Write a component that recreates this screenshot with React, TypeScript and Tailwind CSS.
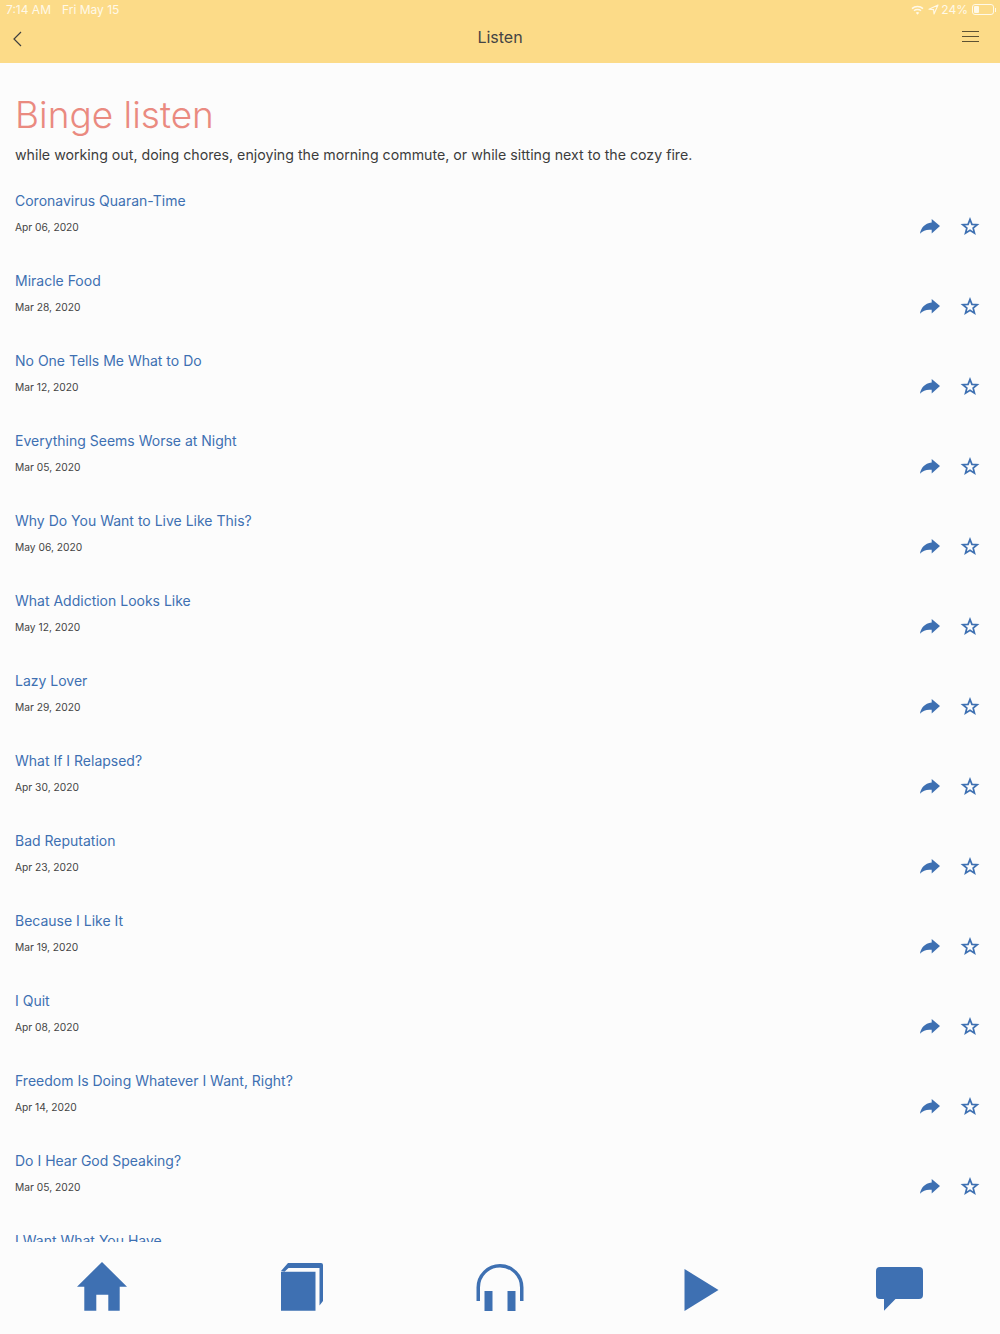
const rows: [string, string][] = [
  ["Coronavirus Quaran-Time", "Apr 06, 2020"],
  ["Miracle Food", "Mar 28, 2020"],
  ["No One Tells Me What to Do", "Mar 12, 2020"],
  ["Everything Seems Worse at Night", "Mar 05, 2020"],
  ["Why Do You Want to Live Like This?", "May 06, 2020"],
  ["What Addiction Looks Like", "May 12, 2020"],
  ["Lazy Lover", "Mar 29, 2020"],
  ["What If I Relapsed?", "Apr 30, 2020"],
  ["Bad Reputation", "Apr 23, 2020"],
  ["Because I Like It", "Mar 19, 2020"],
  ["I Quit", "Apr 08, 2020"],
  ["Freedom Is Doing Whatever I Want, Right?", "Apr 14, 2020"],
  ["Do I Hear God Speaking?", "Mar 05, 2020"],
  ["I Want What You Have", "Apr 02, 2020"],
];

function Share() {
  return (
    <svg width="20" height="15" viewBox="0 0 20 15" className="mt-[1px] block">
      <path d="M11.7 0 L20 7 L11.7 14.5 V10.8 C7 10.3 3 11.2 0 14.7 C1 9 4.5 4.3 11.7 3.5 Z" fill="#3e70b2" />
    </svg>
  );
}

function Star() {
  return (
    <svg width="20" height="20" viewBox="0 0 20 20" className="-mt-[1px] block">
      <path d="M10 2.4 L11.94 7.33 L17.23 7.65 L13.14 11.02 L14.47 16.15 L10 13.3 L5.53 16.15 L6.86 11.02 L2.77 7.65 L8.06 7.33 Z" fill="none" stroke="#3e70b2" strokeWidth="1.7" />
    </svg>
  );
}

export default function App() {
  return (
    <div className="flex h-[1334px] w-[1000px] flex-col overflow-hidden bg-[#fcfcfc] font-['Inter',sans-serif]">
      <header className="h-[63px] shrink-0 bg-[#fcdb88]">
        <div className="flex h-[19px] items-center justify-between pl-[6px] pr-[4px] text-[12px] text-[#fff9e8]">
          <div className="flex gap-[11px]">
            <span>7:14 AM</span>
            <span>Fri May 15</span>
          </div>
          <div className="flex items-center gap-[4px]">
            <svg width="13" height="10" viewBox="0 0 13 10">
              <path d="M1 3.6 C4 0.8 9 0.8 12 3.6 M3 5.8 C4.9 4.1 8.1 4.1 10 5.8" fill="none" stroke="#fff9e8" strokeWidth="1.5" />
              <path d="M4.8 7.7 C5.8 6.9 7.2 6.9 8.2 7.7 L6.5 9.7 Z" fill="#fff9e8" />
            </svg>
            <svg width="11" height="11" viewBox="0 0 11 11">
              <path d="M10 1 L1 5.2 L5.6 5.6 L6 10 Z" fill="none" stroke="#fff9e8" strokeWidth="1.1" strokeLinejoin="round" />
            </svg>
            <span className="-ml-[2px]">24%</span>
            <div className="flex items-center">
              <div className="h-[11px] w-[22px] rounded-[3px] border border-[#fff9e8] p-[1px]">
                <div className="h-full w-[5px] rounded-[1px] bg-[#fff9e8]" />
              </div>
              <div className="ml-[1px] h-[4px] w-[1px] bg-[#fff9e8]" />
            </div>
          </div>
        </div>
        <div className="grid h-[36px] grid-cols-[1fr_auto_1fr] items-center px-[12px]">
          <svg width="11" height="16" viewBox="0 0 11 16" className="mt-[3px]">
            <path d="M9 1 L2 8 L9 15" fill="none" stroke="#3f3f3f" strokeWidth="1.2" />
          </svg>
          <span className="text-[16px] text-[#444444]">Listen</span>
          <div className="mr-[9px] mb-[1px] flex w-[17px] flex-col gap-[4px] justify-self-end">
            <div className="h-px bg-[#5d5233]" />
            <div className="h-px bg-[#5d5233]" />
            <div className="h-px bg-[#5d5233]" />
          </div>
        </div>
      </header>

      <main className="min-h-0 flex-1 overflow-hidden pl-[15px] pr-[20px]">
        <h1 className="mt-[27px] text-[37px] leading-[50px] font-light text-[#ea8a80]">Binge listen</h1>
        <p className="mt-[4px] text-[14.2px] leading-[22px] text-[#3c3c3c]">
          while working out, doing chores, enjoying the morning commute, or while sitting next to the cozy fire.
        </p>
        <ul className="mt-[23px] flex flex-col">
          {rows.map(([title, date]) => (
            <li key={title} className="flex h-[80px] shrink-0 items-start justify-between">
              <div>
                <div className="text-[14px] leading-[24px] text-[#3e70b2]">{title}</div>
                <div className="mt-[4px] text-[10.25px] leading-[20px] text-[#444444]">{date}</div>
              </div>
              <div className="mt-[29px] flex items-start gap-[20px]">
                <Share />
                <Star />
              </div>
            </li>
          ))}
        </ul>
      </main>

      <nav className="grid h-[92px] shrink-0 grid-cols-5 items-end justify-items-center bg-[#fcfcfc] pb-[23px]">
        <svg width="50" height="49" viewBox="0 0 50 49" className="ml-[4px]">
          <path d="M25 0 L50 24.7 H42.7 V48.7 H31.3 V32.7 H19.3 V48.7 H7.3 V24.7 H0 Z" fill="#3e70b2" />
        </svg>
        <svg width="44" height="48" viewBox="0 0 44 48" className="ml-[4px]">
          <path d="M1 8 L8 0 H41 Q43 0 43 2 V38 L39.5 42.5 V5 H8.5 L4.5 8.7 Z" fill="#3e70b2" />
          <path d="M1 8.7 H35.5 V47.7 H1 Z" fill="#3e70b2" />
        </svg>
        <svg width="48" height="47" viewBox="0 0 48 47" className="-ml-[1px]">
          <path d="M2.25 37 V23.5 A21.75 21.75 0 0 1 45.75 23.5 V37" fill="none" stroke="#3e70b2" strokeWidth="3.5" />
          <rect x="8.5" y="27" width="8" height="20" fill="#3e70b2" />
          <rect x="31.5" y="27" width="8" height="20" fill="#3e70b2" />
        </svg>
        <svg width="35" height="42" viewBox="0 0 35 42" className="ml-[2px]">
          <path d="M0.5 0 L34.5 21 L0.5 42 Z" fill="#3e70b2" />
        </svg>
        <svg width="47" height="44" viewBox="0 0 47 44" className="-ml-[1px]">
          <path d="M4 0 H43 Q47 0 47 4 V28 Q47 32 43 32 H19.5 L8 43.7 V32 H4 Q0 32 0 28 V4 Q0 0 4 0 Z" fill="#3e70b2" />
        </svg>
      </nav>
    </div>
  );
}
